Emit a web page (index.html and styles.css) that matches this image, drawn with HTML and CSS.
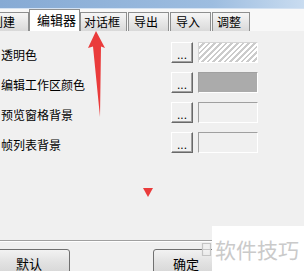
FILE: index.html
```html
<!DOCTYPE html>
<html lang="zh-CN">
<head>
    <meta charset="UTF-8">
    <title>选项 - 编辑器</title>
    <link rel="stylesheet" href="styles.css">
</head>
<body>
    <div class="window">
        <div class="titlebar"></div>
        <nav class="tabs">
            <a class="tab tab-create">创建</a>
            <a class="tab active">编辑器</a>
            <a class="tab tab-dialog">对话框</a>
            <a class="tab">导出</a>
            <a class="tab">导入</a>
            <a class="tab tab-adjust">调整</a>
        </nav>
        <div class="panel">
            <div class="rows">
                <span class="label">透明色</span>
                <button class="browse">...</button>
                <span class="swatch swatch-transparent"></span>

                <span class="label">编辑工作区颜色</span>
                <button class="browse">...</button>
                <span class="swatch swatch-grey"></span>

                <span class="label">预览窗格背景</span>
                <button class="browse">...</button>
                <span class="swatch"></span>

                <span class="label">帧列表背景</span>
                <button class="browse">...</button>
                <span class="swatch"></span>
            </div>
        </div>
        <div class="footer">
            <button class="btn btn-default">默认</button>
            <button class="btn btn-ok">确定</button>
        </div>

        <!-- annotations over the screenshot -->
        <svg class="arrow" width="24" height="90" viewBox="0 0 24 90">
            <path d="M9 0 L1 17 L6 15.5 L13 86 L14 15.5 L18 17 Z" fill="#ea3b3b"/>
        </svg>
        <span class="marker"></span>
        <div class="watermark">
            <svg class="wm-logo" width="11" height="15" viewBox="0 0 11 15">
                <path d="M1.5 1.5 H9.5 V13.5 H1.5 Z M1.5 7.5 H9.5" fill="none" stroke="#c4c4c4" stroke-width="1.2"/>
            </svg>
            <span class="wm-text">软件技巧</span>
        </div>
    </div>
</body>
</html>
```

FILE: styles.css
```css
body { margin: 0; background: #f0f0f0; font-family: "Noto Sans CJK SC", "Microsoft YaHei", sans-serif; font-size: 12px; color: #000; }
.window { position: relative; width: 304px; height: 271px; overflow: hidden; display: flex; flex-direction: column; }

.titlebar { height: 8px; background: linear-gradient(to right, #86aad4 0%, #9dbde0 70%, #c9dcf0 100%); border-bottom: 1px solid #d4e2f2; }

.tabs { display: flex; align-items: flex-end; height: 22px; background: #f8f8f8; border-bottom: 1px solid #f0f0f0; }
.tab { box-sizing: border-box; width: 41px; height: 19px; line-height: 17px; padding: 0 0 0 5px; margin-right: 1px; border: 1px solid #8e8f8f; border-bottom: none; background: linear-gradient(#f6f6f6, #d9d9d9); }
.tab-create { margin-left: -20px; width: 49px; padding-left: 10px; }
.tab.active { height: 22px; line-height: 20px; width: 51px; padding-left: 7px; margin: 0 0 0 -1px; background: #fff; border-color: #8e8f8f; font-size: 13px; }
.tab-dialog { width: 47px; padding-left: 3px; margin-left: 0; }
.tab-adjust { width: 38px; padding-left: 4px; }

.panel { flex: 1; }
.rows { display: grid; grid-template-columns: 164px 22px 60px; grid-auto-rows: 21px; column-gap: 5px; row-gap: 9px; padding: 10px 0 0 2px; }
.label { display: flex; align-items: center; padding-top: 3px; margin-left: -1px; white-space: nowrap; }

.browse { box-sizing: border-box; width: 22px; height: 21px; padding: 0 0 3px; display: flex; align-items: flex-end; justify-content: center; font: 12px "Liberation Sans", sans-serif; line-height: 8px; background: #f0f0f0; border: 1px solid; border-color: #fff #696969 #696969 #fff; box-shadow: inset -1px -1px #a0a0a0; }

.swatch { box-sizing: border-box; background: #f0f0f0; border: 1px solid; border-color: #a0a0a0 #fff #fff #a0a0a0; }
.swatch-transparent { background: repeating-linear-gradient(-45deg, #fff 0 2px, #cbcbcb 2px 4px); border-color: #d4d4d4 #fff #fff #d4d4d4; }
.swatch-grey { background: #ababab; }

.footer { height: 22px; border-top: 1px solid #a0a0a0; box-shadow: inset 0 1px #fff; padding-top: 8px; display: flex; }
.btn { box-sizing: border-box; height: 26px; padding: 3px 0 0; font: 13px "Noto Sans CJK SC", sans-serif; line-height: 16px; border: 1px solid #707070; border-radius: 3px; background: linear-gradient(#f2f2f2, #e2e2e2 50%, #d6d6d6); }
.btn-default { width: 82px; margin-left: -12px; }
.btn-ok { width: 66px; margin-left: 83px; }

.arrow { position: absolute; left: 87px; top: 31px; }
.marker { position: absolute; left: 143px; top: 188px; width: 0; height: 0; border-left: 5px solid transparent; border-right: 5px solid transparent; border-top: 9px solid #ea3b3b; }

.watermark { position: absolute; left: 212px; top: 226px; width: 92px; height: 45px; background: #fff; }
.wm-logo { position: absolute; left: -11px; top: 16px; }
.wm-text { position: absolute; left: 3px; top: 10px; font-size: 21px; line-height: 26px; color: #cacaca; white-space: nowrap; }
```
